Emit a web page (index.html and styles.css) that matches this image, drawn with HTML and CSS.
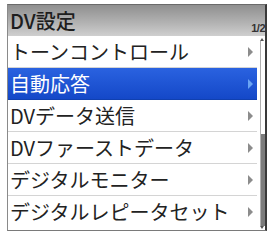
FILE: index.html
```html
<!DOCTYPE html>
<html lang="ja">
<head>
    <meta charset="UTF-8">
    <title>DV設定</title>
    <link rel="stylesheet" href="styles.css">
</head>
<body>
    <div class="screen">
        <div class="menu-header">
            <span class="menu-title">DV設定</span>
            <span class="page-no">1/2</span>
        </div>
        <div class="menu-body">
            <ul class="menu-list">
                <li class="menu-item">トーンコントロール<span class="arrow"></span></li>
                <li class="menu-item selected">自動応答<span class="arrow"></span></li>
                <li class="menu-item">DVデータ送信<span class="arrow"></span></li>
                <li class="menu-item">DVファーストデータ<span class="arrow"></span></li>
                <li class="menu-item">デジタルモニター<span class="arrow"></span></li>
                <li class="menu-item">デジタルレピータセット<span class="arrow"></span></li>
            </ul>
            <div class="scrollbar">
                <span class="scroll-up"></span>
                <div class="scroll-track">
                    <div class="scroll-thumb"></div>
                </div>
                <span class="scroll-down"></span>
            </div>
        </div>
    </div>
</body>
</html>
```

FILE: styles.css
```css
body {
    margin: 0;
    padding: 0;
    background-color: #ffffff;
    font-family: "Noto Sans CJK JP", "Noto Sans", sans-serif;
}

.screen {
    margin: 4px 0 0 7px;
    width: 257px;
    height: 225px;
    border-top: 1px solid #6a6a6a;
    border-left: 1px solid #8a8a8a;
    border-right: 2px solid #3a3a3a;
    border-bottom: 1px solid #7a7a7a;
    display: flex;
    flex-direction: column;
}

.menu-header {
    height: 31px;
    background: linear-gradient(#8f8f8f, #b4b4b4 60%, #cfcfcf);
    display: flex;
    justify-content: space-between;
    align-items: center;
    padding-left: 2px;
}

.menu-title {
    font-size: 20px;
    font-weight: 500;
    color: #1e1e1e;
    line-height: 1;
}

.page-no {
    align-self: flex-end;
    margin-bottom: 2px;
    font-family: "Liberation Sans", sans-serif;
    font-size: 11px;
    font-weight: bold;
    color: #333;
    letter-spacing: -0.5px;
}

.menu-body {
    flex: 1;
    display: flex;
}

.menu-list {
    list-style: none;
    margin: 0;
    padding: 0;
    flex: 1;
}

.menu-item {
    height: 31px;
    border-bottom: 1px solid #d4d4d4;
    display: flex;
    align-items: center;
    justify-content: space-between;
    padding: 0 4px 0 2px;
    font-size: 20px;
    color: #222;
    white-space: nowrap;
}

.menu-item:last-child {
    border-bottom: none;
}

.menu-item.selected {
    background: linear-gradient(#2a62e0, #1448c8);
    color: #ffffff;
    border-bottom-color: #1040b0;
}

.arrow {
    width: 0;
    height: 0;
    border-top: 5px solid transparent;
    border-bottom: 5px solid transparent;
    border-left: 5px solid #8c8c8c;
}

.selected .arrow {
    border-left-color: #6aa4f4;
}

.scrollbar {
    width: 8px;
    display: flex;
    flex-direction: column;
    align-items: flex-end;
}

.scroll-up,
.scroll-down {
    width: 0;
    height: 0;
    margin-right: 1px;
    border-left: 2px solid transparent;
    border-right: 2px solid transparent;
}

.scroll-up {
    margin-top: 2px;
    border-bottom: 3px solid #555;
}

.scroll-down {
    margin-bottom: 1px;
    border-top: 3px solid #555;
}

.scroll-track {
    flex: 1;
    width: 4px;
    border-left: 1px solid #b0b0b0;
    display: flex;
    flex-direction: column;
    justify-content: flex-end;
}

.scroll-thumb {
    height: 92px;
    background-color: #7c7c7c;
}
```
